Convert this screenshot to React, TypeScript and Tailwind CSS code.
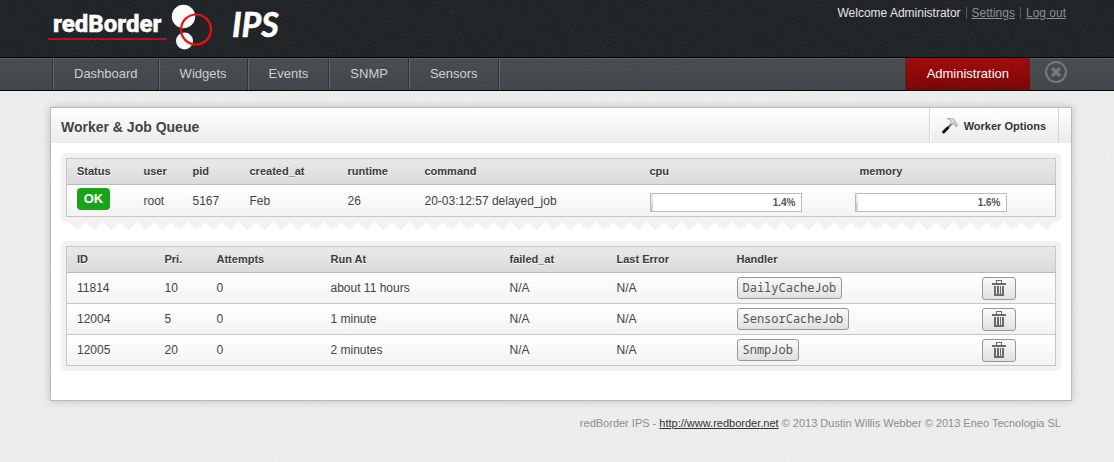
import React from "react";

const navItems = ["Dashboard", "Widgets", "Events", "SNMP", "Sensors"];

const jobs = [
  { id: "11814", pri: "10", attempts: "0", runAt: "about 11 hours", failed: "N/A", error: "N/A", handler: "DailyCacheJob" },
  { id: "12004", pri: "5", attempts: "0", runAt: "1 minute", failed: "N/A", error: "N/A", handler: "SensorCacheJob" },
  { id: "12005", pri: "20", attempts: "0", runAt: "2 minutes", failed: "N/A", error: "N/A", handler: "SnmpJob" },
];

function Grain({ id, className }: { id: string; className: string }) {
  return (
    <svg aria-hidden="true" className={`pointer-events-none absolute inset-0 h-full w-full ${className}`}>
      <filter id={id}>
        <feTurbulence type="fractalNoise" baseFrequency="0.5" numOctaves="2" stitchTiles="stitch" />
        <feColorMatrix type="saturate" values="0" />
      </filter>
      <rect width="100%" height="100%" filter={`url(#${id})`} />
    </svg>
  );
}

function Logo() {
  return (
    <svg width="240" height="50" viewBox="0 0 240 50" role="img" aria-label="redBorder IPS">
      <text x="5" y="32" fill="#fff" stroke="#fff" strokeWidth="0.5" fontFamily="Roboto, sans-serif" fontWeight="800" fontSize="24">redBorder</text>
      <rect x="0" y="38" width="119" height="2" fill="#b30e12" />
      <circle cx="135.500" cy="16.500" r="11.700" fill="#fff" />
      <circle cx="136.500" cy="41" r="8.500" fill="#fff" />
      <circle cx="148" cy="29.500" r="15" fill="none" stroke="#f00808" strokeWidth="2.2" />
      <text x="184" y="37" fill="#fff" stroke="#fff" strokeWidth="0.6" fontFamily="Lato, sans-serif" fontWeight="700" fontStyle="italic" fontSize="34">IPS</text>
    </svg>
  );
}

function HammerIcon() {
  return (
    <svg width="16" height="16" viewBox="0 0 16 16" aria-hidden="true">
      <path d="M10 5.500 5.500 10" stroke="#666" strokeWidth="1.800" />
      <path d="M5.600 10 1.600 14" stroke="#111" strokeWidth="3" strokeLinecap="round" />
      <path d="M5 .8C8-.2 11 .4 13 2.400l.3 1.800 1.600 1.500.7 1.800-1.500 1.300-1.600-1.500-.4-1.500-1.600-.2-1.200 1.200L8 5.700l1.400-2C9 2.200 7 1.300 5 .8Z" fill="#cdcdcd" stroke="#8b8b8b" strokeWidth=".6" />
      <path d="M9 1.700c1.500.200 2.500 1 3 2.200" stroke="#f8f8f8" strokeWidth=".9" fill="none" />
    </svg>
  );
}

function TrashIcon() {
  return (
    <svg width="16" height="16" viewBox="0 0 16 16" aria-hidden="true" fill="#6b6b6b" shapeRendering="crispEdges">
      <path d="M5 0h6v3H5zM6 1v2h4V1z" fillRule="evenodd" />
      <rect x="1" y="3" width="14" height="2" />
      <path d="M3 6h2v8h1V6h1.500v8h1V6H10v8h1V6h2v10H3z" />
    </svg>
  );
}

function Meter({ value, label }: { value: number; label: string }) {
  return (
    <div role="meter" aria-label={label} aria-valuenow={value} aria-valuemin={0} aria-valuemax={100} className="mt-1 flex h-[19px] w-[152px] border border-[#bbb] bg-white">
      <div className="h-full bg-linear-to-b from-[#e4e9ec] from-50% to-[#c6d5dc] to-50%" style={{ width: `${value}%` }} />
      <span className="flex-1 pr-[5px] text-right text-[10px] leading-[18px] font-bold text-[#555]">{value}%</span>
    </div>
  );
}

const frame = "rounded-[5px] bg-[#f2f2f2] p-[5px]";
const table = "w-full table-fixed border-collapse border border-[#c6c6c6] text-left";
const headRow = "h-[26px] border-b border-[#bbb] bg-linear-to-b from-[#e9e9e9] to-[#dadada] text-[11px] text-[#3b3b3b] [text-shadow:0_1px_0_#fff]";
const bodyRow = "h-[31px] border-b border-[#c6c6c6] bg-linear-to-b from-white to-[#f3f3f3] text-[12px] text-[#444]";
const cell = "p-0 pl-[10px] whitespace-nowrap";

export default function App() {
  return (
    <div className="relative min-h-screen bg-[#eeeeee] font-['Liberation_Sans',Arial,sans-serif]">
      <Grain id="page-grain" className="opacity-[0.06]" />
      <header className="relative bg-[#1d2124]">
        <div className="flex h-[57px] items-start justify-between pr-[48px] pl-[48px]">
          <Logo />
          <div className="flex items-center pt-[6px] text-[12px] leading-[14px]">
            <span className="text-[#e6e6e6]">Welcome Administrator</span>
            <span className="mx-[5px] h-3 w-px bg-[#50565a]" />
            <a href="#settings" className="text-[#8b8f92] underline">Settings</a>
            <span className="mx-[5px] h-3 w-px bg-[#50565a]" />
            <a href="#logout" className="text-[#8b8f92] underline">Log out</a>
          </div>
        </div>
        <nav className="flex h-[34px] justify-between border-y border-black bg-linear-to-b from-[#464b4e] to-[#3e4447] pr-[46px] pl-[52px] text-[13px] text-[#d0d0d0] shadow-[inset_0_1px_0_#5b5f62]">
          <ul className="flex border-r border-[#5f6467]">
            {navItems.map((n) => (
              <li key={n} className="flex border-l border-[#2c3033]">
                <a href={`#${n.toLowerCase()}`} className="flex items-center border-l border-[#5f6467] px-5">{n}</a>
              </li>
            ))}
            <li className="w-px bg-[#2c3033]" />
          </ul>
          <div className="flex items-center">
            <a href="#administration" className="flex h-full items-center border-l border-[#2c3033] bg-linear-to-b from-[#a00808] to-[#780202] px-[21px] text-white">Administration</a>
            <button type="button" aria-label="Close" className="-mt-1 ml-[14px] text-[#73787b]">
              <svg width="24" height="24" viewBox="0 0 24 24" fill="none" stroke="currentColor">
                <circle cx="12" cy="12" r="10" strokeWidth="2" />
                <path d="m8 8 8 8m0-8-8 8" strokeWidth="3.200" />
              </svg>
            </button>
          </div>
        </nav>
        <Grain id="header-grain" className="opacity-[0.06]" />
      </header>

      <div className="relative pt-4 pr-[42px] pl-[50px]">
        <main className="border border-[#b9b9b9] bg-white pb-[29px] shadow-[0_0_8px_rgba(0,0,0,0.2)]">
          <div className="flex h-[35px] justify-between bg-linear-to-b from-white to-[#ebebeb] pr-3 pl-[10px]">
            <h1 className="text-[14px] leading-[38px] font-bold text-[#444]">Worker &amp; Job Queue</h1>
            <button type="button" className="flex items-center gap-[6px] border-x border-[#d6d6d6] px-3 text-[11px] font-bold text-[#333] shadow-[inset_1px_0_0_#fff]">
              <HammerIcon />
              <span className="pt-[2px]">Worker Options</span>
            </button>
          </div>

          <div className="px-[10px] pt-[10px]">
            <section className={frame}>
              <table className={table}>
                <colgroup>
                  <col className="w-[67px]" />
                  <col className="w-[49px]" />
                  <col className="w-[57px]" />
                  <col className="w-[98px]" />
                  <col className="w-[77px]" />
                  <col className="w-[225px]" />
                  <col className="w-[205px]" />
                  <col />
                </colgroup>
                <thead>
                  <tr className={headRow}>
                    {["Status", "user", "pid", "created_at", "runtime", "command", "cpu"].map((h) => (
                      <th key={h} className={cell}>{h}</th>
                    ))}
                    <th className="p-0 pl-[15px]">memory</th>
                  </tr>
                </thead>
                <tbody>
                  <tr className="h-[32px] border-b border-[#c6c6c6] bg-linear-to-b from-white to-[#f3f3f3] text-[12px] text-[#444]">
                    <td className={cell}>
                      <span className="mb-1 block w-[33px] rounded-[4px] bg-[#1aa319] text-center text-[13px] leading-[22px] font-bold text-white">OK</span>
                    </td>
                    <td className={cell}>root</td>
                    <td className={cell}>5167</td>
                    <td className={cell}>Feb</td>
                    <td className={cell}>26</td>
                    <td className={cell}>20-03:12:57 delayed_job</td>
                    <td className={cell}><Meter value={1.4} label="cpu" /></td>
                    <td className={cell}><Meter value={1.6} label="memory" /></td>
                  </tr>
                </tbody>
              </table>
            </section>
            <div className="h-[19px] pr-[6px] pl-2">
              <svg width="100%" height="9" className="block" aria-hidden="true">
                <pattern id="teeth" width="17" height="9" patternUnits="userSpaceOnUse">
                  <path d="M0 0h17L8.500 8.500z" fill="#f2f2f2" />
                </pattern>
                <rect width="100%" height="9" fill="url(#teeth)" />
              </svg>
            </div>

            <section className={frame}>
              <table className={table}>
                <colgroup>
                  <col className="w-[88px]" />
                  <col className="w-[52px]" />
                  <col className="w-[114px]" />
                  <col className="w-[179px]" />
                  <col className="w-[107px]" />
                  <col className="w-[120px]" />
                  <col className="w-[245px]" />
                  <col />
                </colgroup>
                <thead>
                  <tr className={headRow}>
                    {["ID", "Pri.", "Attempts", "Run At", "failed_at", "Last Error", "Handler"].map((h) => (
                      <th key={h} className={cell}>{h}</th>
                    ))}
                    <td />
                  </tr>
                </thead>
                <tbody>
                  {jobs.map((j) => (
                    <tr key={j.id} className={bodyRow}>
                      <td className={cell}>{j.id}</td>
                      <td className={cell}>{j.pri}</td>
                      <td className={cell}>{j.attempts}</td>
                      <td className={cell}>{j.runAt}</td>
                      <td className={cell}>{j.failed}</td>
                      <td className={cell}>{j.error}</td>
                      <td className={cell}>
                        <button type="button" className="block h-[22px] rounded-[3px] border border-[#979797] bg-linear-to-b from-[#fafafa] to-[#e0e0e0] px-[5px] font-['Noto_Sans_Mono','DejaVu_Sans_Mono',monospace] text-[12px] leading-[20px] text-[#555]">{j.handler}</button>
                      </td>
                      <td className={cell}>
                        <button type="button" aria-label={`Delete job ${j.id}`} className="flex h-[23px] w-[34px] items-center justify-center rounded-[3px] border border-[#979797] bg-linear-to-b from-[#fafafa] to-[#e0e0e0]">
                          <TrashIcon />
                        </button>
                      </td>
                    </tr>
                  ))}
                </tbody>
              </table>
            </section>
          </div>
        </main>
        <footer className="pt-[15px] pr-[11px] text-right text-[11px] leading-[14px] text-[#8c8c8c]">
          redBorder IPS - <a href="http://www.redborder.net" className="text-[#333] underline">http://www.redborder.net</a> © 2013 Dustin Willis Webber © 2013 Eneo Tecnologia SL
        </footer>
      </div>
    </div>
  );
}
